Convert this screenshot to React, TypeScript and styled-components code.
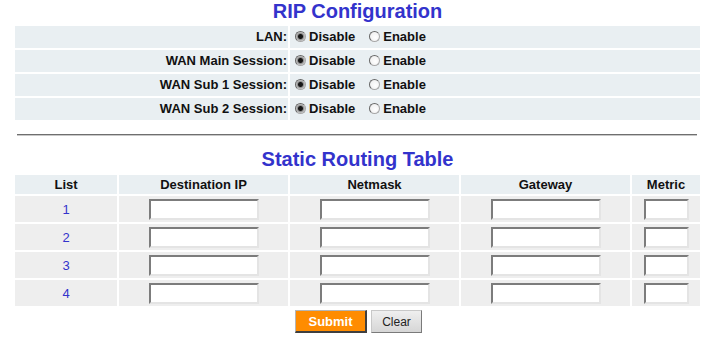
import styled, { createGlobalStyle } from "styled-components";

const GlobalStyle = createGlobalStyle`
  body {
    margin: 0;
    background: #fff;
    font-family: "Liberation Sans", Arial, sans-serif;
    color: #111;
  }
`;

const sessions = ["LAN:", "WAN Main Session:", "WAN Sub 1 Session:", "WAN Sub 2 Session:"];
const routes = [1, 2, 3, 4];

function App() {
  return (
    <Page>
      <GlobalStyle />
      <Title>RIP Configuration</Title>
      <RipGrid>
        {sessions.map((label, i) => (
          <RipRow key={label}>
            <LabelCell>{label}</LabelCell>
            <OptionCell>
              <Choice>
                <Radio name={`rip${i}`} defaultChecked />
                Disable
              </Choice>
              <Choice>
                <Radio name={`rip${i}`} />
                Enable
              </Choice>
            </OptionCell>
          </RipRow>
        ))}
      </RipGrid>

      <Divider />

      <Title $top={12} $height={27}>Static Routing Table</Title>
      <RouteGrid>
        <HeadCell>List</HeadCell>
        <HeadCell>Destination IP</HeadCell>
        <HeadCell>Netmask</HeadCell>
        <HeadCell>Gateway</HeadCell>
        <HeadCell>Metric</HeadCell>
        {routes.map((n) => (
          <Row key={n}>
            <NumCell>{n}</NumCell>
            <Cell>
              <Field />
            </Cell>
            <Cell>
              <Field />
            </Cell>
            <Cell>
              <Field />
            </Cell>
            <Cell>
              <Field $small />
            </Cell>
          </Row>
        ))}
      </RouteGrid>

      <Buttons>
        <SubmitButton type="button">Submit</SubmitButton>
        <ClearButton type="button">Clear</ClearButton>
      </Buttons>
    </Page>
  );
}

export default App;

const Page = styled.div`
  width: 685px;
  margin-left: 15px;
  display: flex;
  flex-direction: column;
`;

const Title = styled.h2<{ $top?: number; $height?: number }>`
  margin: ${(p) => p.$top ?? 0}px 0 0;
  height: ${(p) => p.$height ?? 26}px;
  color: #3333cc;
  font-size: 20px;
  font-weight: bold;
  line-height: 22px;
  text-align: center;
`;

const RipGrid = styled.div`
  display: flex;
  flex-direction: column;
  row-gap: 2px;
`;

const RipRow = styled.div`
  display: grid;
  grid-template-columns: 273px 1fr;
  column-gap: 2px;
  height: 22px;
`;

const LabelCell = styled.div`
  background: #e9eff2;
  font-size: 13px;
  font-weight: bold;
  line-height: 21px;
  text-align: right;
  padding-right: 1px;
`;

const OptionCell = styled.div`
  display: flex;
  align-items: center;
  column-gap: 14px;
  padding: 0 0 1px 5px;
  background: #e9eff2;
  font-size: 13px;
  font-weight: bold;
`;

const Choice = styled.label`
  display: flex;
  align-items: center;
`;

const Radio = styled.input.attrs({ type: "radio" })`
  appearance: none;
  width: 11px;
  height: 11px;
  margin: 0 3px 0 0;
  border-radius: 50%;
  border: 1px solid #a8a8a8;
  border-top-color: #686868;
  border-left-color: #686868;
  background: radial-gradient(circle at 60% 60%, #ffffff 0, #ebebeb 100%);

  &:checked {
    background: radial-gradient(circle, #161616 0 2px, #8e8e8e 3px, #e6e6e6 5px);
  }
`;

const Divider = styled.hr`
  margin: 14px 3px 0 2px;
  height: 0;
  border: 0;
  border-top: 1px solid #6f6f6f;
  border-bottom: 1px solid #c8c8c8;
`;

const RouteGrid = styled.div`
  display: grid;
  grid-template-columns: 102px 169px 169px 169px 68px;
  grid-auto-rows: 26px;
  grid-template-rows: 19px;
  gap: 2px;
`;

const Row = styled.div`
  display: contents;
`;

const HeadCell = styled.div`
  background: #e9eff2;
  font-size: 13px;
  font-weight: bold;
  line-height: 19px;
  text-align: center;
`;

const Cell = styled.div`
  display: flex;
  align-items: center;
  justify-content: center;
  background: #eeeeee;
`;

const NumCell = styled(Cell)`
  color: #3333cc;
  font-size: 13px;
`;

const Field = styled.input.attrs({ type: "text" })<{ $small?: boolean }>`
  box-sizing: border-box;
  width: ${(p) => (p.$small ? 45 : 110)}px;
  height: 21px;
  margin: 0;
  padding: 0 2px;
  background: #fff;
  border: 2px solid;
  border-color: #7c7c7c #e4e4e4 #e4e4e4 #7c7c7c;
  font-family: "Liberation Sans", Arial, sans-serif;
  font-size: 12px;
  outline: none;
`;

const Buttons = styled.div`
  display: flex;
  justify-content: center;
  column-gap: 4px;
  margin-top: 4px;
  padding-left: 2px;
`;

const SubmitButton = styled.button`
  width: 72px;
  height: 23px;
  padding: 0;
  background: #ff8c00;
  border: 1px solid;
  border-width: 1px 2px 2px 1px;
  border-color: #b5b5b5 #3f3f3f #3f3f3f #b5b5b5;
  color: #fff;
  font-family: "Liberation Sans", Arial, sans-serif;
  font-size: 13px;
  font-weight: bold;
`;

const ClearButton = styled.button`
  width: 51px;
  height: 23px;
  padding: 0;
  background: linear-gradient(#efefef, #d6d6d6);
  border: 1px solid;
  border-color: #c8c8c8 #7a7a7a #7a7a7a #c8c8c8;
  color: #222;
  font-family: "Liberation Sans", Arial, sans-serif;
  font-size: 12px;
`;
